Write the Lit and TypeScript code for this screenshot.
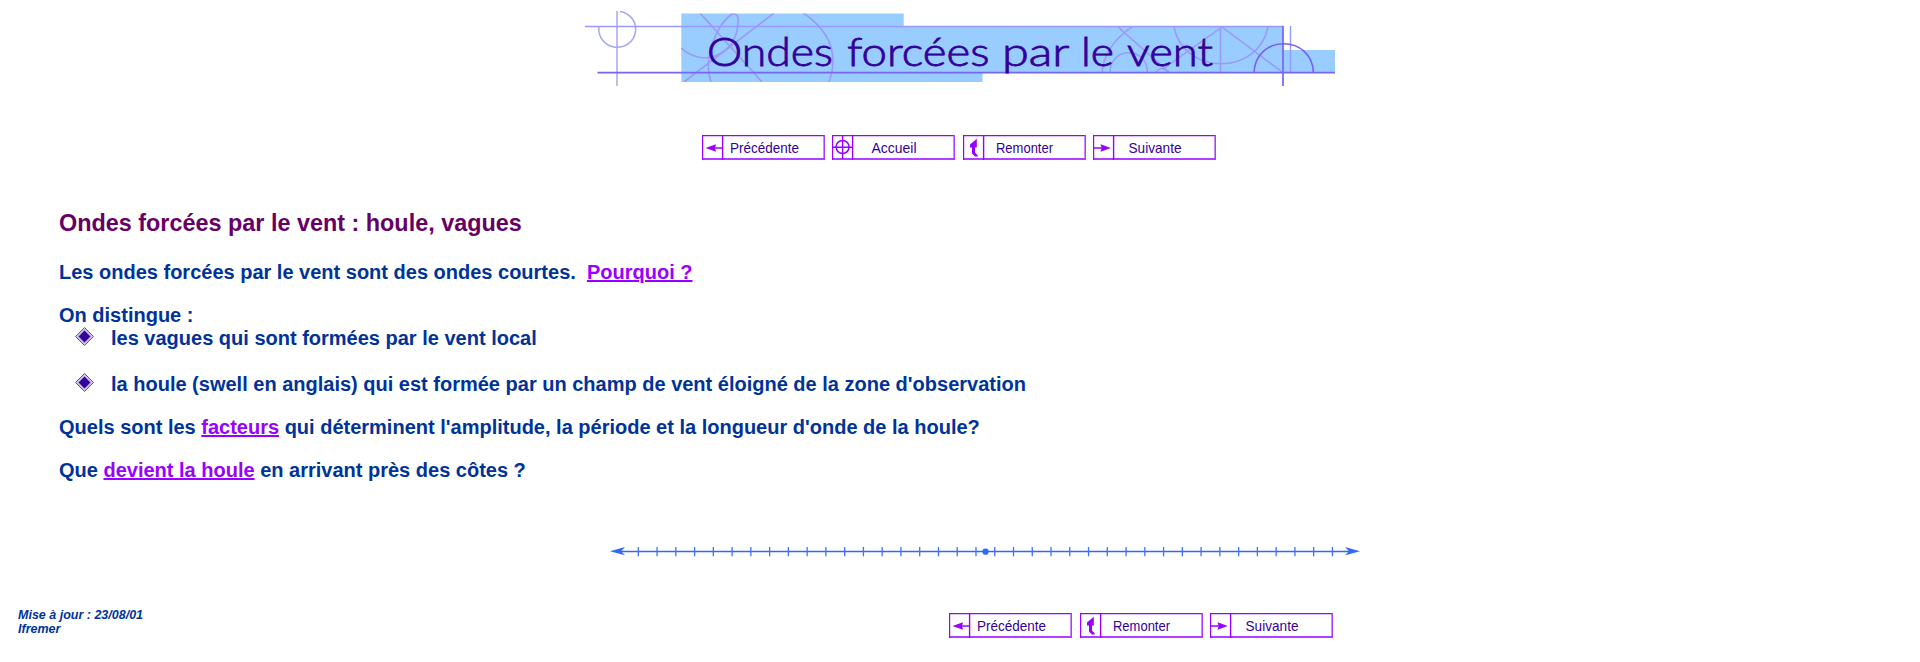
import { LitElement, html, svg, css } from "lit";
import { customElement, property } from "lit/decorators.js";

type Kind = "prev" | "home" | "up" | "next";

const LABELS: Record<Kind, { text: string; x: number; w: number }> = {
  prev: { text: "Précédente", x: 28, w: 69 },
  home: { text: "Accueil", x: 39.5, w: 45 },
  up: { text: "Remonter", x: 33, w: 57 },
  next: { text: "Suivante", x: 35.5, w: 53 },
};

const GLYPHS = {
  prev: svg`<path d="M10 13H21" stroke="#90f" stroke-width="1.5"/><path d="M3.5 13L14 9.2L13 13L14 16.8Z" fill="#90f"/>`,
  home: svg`<circle cx="10.6" cy="12" r="6.5" fill="none" stroke="#90f" stroke-width="1.5"/><path d="M1 12.3H20M10.6 1V24" stroke="#90f" stroke-width="1.4"/>`,
  up: svg`<path d="M13.8 3.8V12.4H12V17.5L14.8 20.5V21.5H12L9 18.5V12.6H7V9.6Z" fill="#90f"/>`,
  next: svg`<path d="M1 13H12" stroke="#90f" stroke-width="1.5"/><path d="M17.8 13L7.5 9.2L8.7 13L7.5 16.8Z" fill="#90f"/>`,
};

@customElement("nav-button")
class NavButton extends LitElement {
  @property() kind: Kind = "prev";
  static styles = css`
    :host { display: block; width: 123px; height: 25px; }
    svg { display: block; }
    text { font: 14.4px "Liberation Sans", Arial, sans-serif; fill: #330099; }
  `;
  render() {
    const l = LABELS[this.kind];
    return html`<svg width="123" height="25" viewBox="0 0 123 25">
      <path d="M0 .5H123M0 24H123M.5 0V25M20.6 0V25" fill="none" stroke="#90f" stroke-width="1.4"/>
      <path d="M122.2 0V25" stroke="#a83cff" stroke-width="1.6"/>
      ${GLYPHS[this.kind]}
      <text x=${l.x} y="18" textLength=${l.w} lengthAdjust="spacingAndGlyphs">${l.text}</text>
    </svg>`;
  }
}

const TITLE_WORDS = [
  { text: "Ondes", x: 707, w: 126 },
  { text: "forcées", x: 847, w: 142.5 },
  { text: "par", x: 1002, w: 67.5 },
  { text: "le", x: 1081, w: 33 },
  { text: "vent", x: 1127, w: 86 },
];

@customElement("title-banner")
class TitleBanner extends LitElement {
  static styles = css`
    :host { display: block; }
    svg { display: block; }
    text { font: 300 39.5px Lato, "Open Sans", sans-serif; fill: #330099; stroke: #330099; stroke-width: 0.8; }
  `;
  render() {
    return html`<svg width="750" height="76" viewBox="585 11 750 76">
      <defs>
        <clipPath id="left"><rect x="681" y="13.5" width="222" height="68.5"/></clipPath>
        <clipPath id="right"><rect x="1090" y="27" width="192" height="46"/></clipPath>
      </defs>
      <path d="M681.3 13.5H903.7V26.5H1283V50H1335V73H982.5V82H681.3Z" fill="#99ccff"/>
      <g fill="none" stroke="#9999f8" stroke-width="1.6" clip-path="url(#left)">
        <path d="M700 13L762 82M774 13L684 82"/>
        <path d="M681 48Q691 57 704 58Q722 57 732 43Q739 31 738 18Q737 13 732 14Q716 25 709 57Q707 71 711 82"/>
        <path d="M802 12Q844 40 829 82"/>
      </g>
      <g fill="none" stroke="#9999f8" stroke-width="1.5" clip-path="url(#right)">
        <path d="M1118 27L1170 73M1132 27Q1104 46 1102 73"/>
        <path d="M1110 73C1110 46 1147.5 46 1147.5 73M1155 73Q1163 64 1168 73"/>
        <path d="M1163 69L1222 27L1282 72M1220.5 27V73M1174 27C1184 76 1258 76 1268 27"/>
      </g>
      <g fill="none" stroke="#a6a6f8" stroke-width="1.5">
        <path d="M620 11.5A18.4 18 0 1 1 599 27M617 11V86"/>
      </g>
      <path d="M585 26.5H1283M1290.5 26V73" stroke="#9999ff" stroke-width="1.4"/>
      <path d="M597.5 72.7H1335" stroke="#7766f0" stroke-width="1.8"/>
      <path d="M1283 26V86" stroke="#8066ff" stroke-width="1.8"/>
      <path d="M1254 73C1255 34 1312.5 34 1313.5 73" fill="none" stroke="#7a5cf0" stroke-width="1.6"/>
      ${TITLE_WORDS.map((w) => svg`<text x=${w.x} y="65.7" textLength=${w.w} lengthAdjust="spacingAndGlyphs">${w.text}</text>`)}
    </svg>`;
  }
}

@customElement("scale-rule")
class ScaleRule extends LitElement {
  static styles = css`
    :host { display: block; }
    svg { display: block; }
  `;
  render() {
    const ticks = Array.from({ length: 38 }, (_, i) => 28.3 + i * 18.76);
    return html`<svg width="750" height="12" viewBox="0 0 750 12">
      <path d="M10 4.5H740" stroke="#3366ff" stroke-width="1.3"/>
      ${ticks.map((x) => svg`<path d="M${x} 0V9.3" stroke="#3f70ff" stroke-width="1.3"/>`)}
      <path d="M0 4.2L15 0L11 4.2L15 8.2Z" fill="#3366ff"/>
      <path d="M750 4.2L735 0L739 4.2L735 8.2Z" fill="#3366ff"/>
      <circle cx="375.5" cy="4.7" r="3.1" fill="#3366ff"/>
    </svg>`;
  }
}

@customElement("app-root")
class AppRoot extends LitElement {
  static styles = css`
    :host {
      display: flex; flex-direction: column; box-sizing: border-box;
      width: 1920px; height: 662px; padding-top: 11px; overflow: hidden;
      background: #fff; color: #003399;
      font: bold 20px/23px "Liberation Sans", Arial, sans-serif; white-space: nowrap;
    }
    title-banner { margin-left: 585px; height: 76px; }
    .nav { display: flex; gap: 7.3px; margin: 48px 0 0 702px; }
    main { margin: 50px 0 0 59px; }
    h3 { margin: 0 0 24px; font-size: 23.4px; line-height: 27px; color: #660066; }
    p { margin: 0 0 20px; }
    .intro { margin: 0; }
    ul { list-style: none; margin: 0 0 20px; padding: 0 0 0 16px; display: grid; row-gap: 23px; }
    li { display: flex; gap: 17px; }
    .bullet { width: 19px; height: 19px; }
    a { color: #9900ff; text-decoration: underline; text-decoration-thickness: 2px; }
    scale-rule { margin: 65px 0 0 610px; height: 12px; }
    footer { display: flex; margin: 54px 0 0 18px; }
    .date { width: 931px; font: italic bold 12.5px/14px "Liberation Sans", Arial, sans-serif; margin-top: -5px; }
    .foot-nav { display: flex; gap: 7.5px; }
  `;
  bullet() {
    return html`<svg class="bullet" viewBox="0 0 19 19">
      <path d="M9.5 .5L18.5 9.5L9.5 18.5L.5 9.5Z" fill="#d0c4ea" stroke="#6a4ab2" stroke-width="1"/>
      <path d="M9.5 2.9L16.1 9.5L9.5 16.1L2.9 9.5Z" fill="#a08ad2"/>
      <path d="M9.5 3.8L15.2 9.5L9.5 15.2L3.8 9.5Z" fill="#330099"/>
    </svg>`;
  }
  render() {
    return html`
      <title-banner></title-banner>
      <div class="nav">
        ${["prev", "home", "up", "next"].map((k) => html`<nav-button kind=${k}></nav-button>`)}
      </div>
      <main>
        <h3>Ondes forcées par le vent : houle, vagues</h3>
        <p>Les ondes forcées par le vent sont des ondes courtes.&nbsp; <a>Pourquoi ?</a></p>
        <p class="intro">On distingue :</p>
        <ul>
          <li>${this.bullet()}<span>les vagues qui sont formées par le vent local</span></li>
          <li>${this.bullet()}<span>la houle (swell en anglais) qui est formée par un champ de vent éloigné de la zone d'observation</span></li>
        </ul>
        <p>Quels sont les <a>facteurs</a> qui déterminent l'amplitude, la période et la longueur d'onde de la houle?</p>
        <p class="intro">Que <a>devient la houle</a> en arrivant près des côtes ?</p>
      </main>
      <scale-rule></scale-rule>
      <footer>
        <div class="date">Mise à jour : 23/08/01<br>Ifremer</div>
        <div class="foot-nav">
          ${["prev", "up", "next"].map((k) => html`<nav-button kind=${k}></nav-button>`)}
        </div>
      </footer>
    `;
  }
}
